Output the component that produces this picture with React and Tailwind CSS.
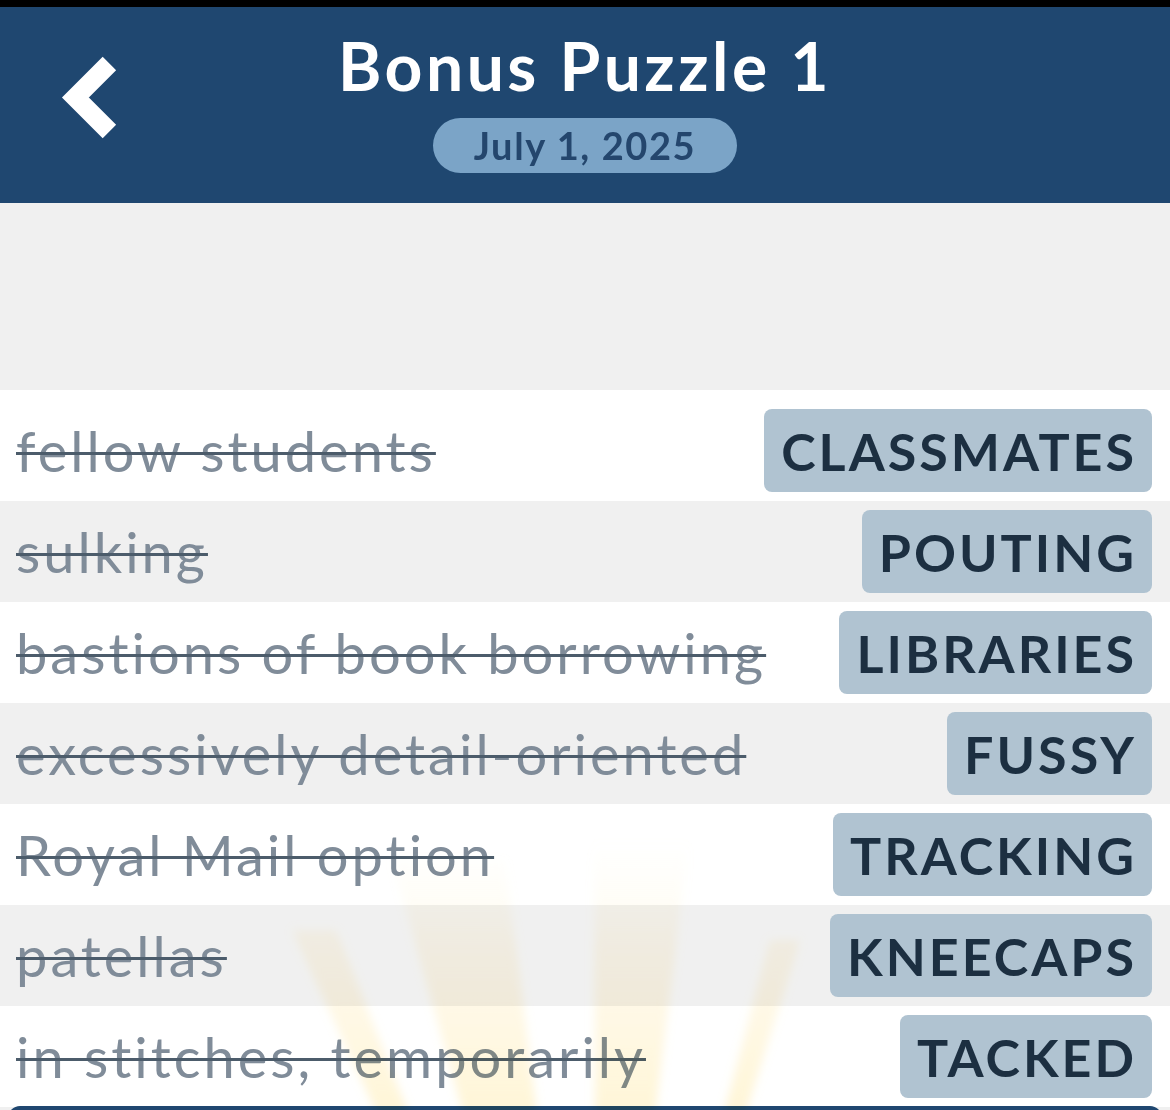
const clues = [
  { clue: "fellow students", answer: "CLASSMATES" },
  { clue: "sulking", answer: "POUTING" },
  { clue: "bastions of book borrowing", answer: "LIBRARIES" },
  { clue: "excessively detail-oriented", answer: "FUSSY" },
  { clue: "Royal Mail option", answer: "TRACKING" },
  { clue: "patellas", answer: "KNEECAPS" },
  { clue: "in stitches, temporarily", answer: "TACKED" },
];

// faint celebratory rays fanning up from below the list
const rays = [
  [[597, 1590], [392, 860], [505, 860]],
  [[597, 1590], [594, 830], [690, 830]],
  [[597, 1590], [292, 930], [336, 930]],
  [[597, 1590], [770, 940], [800, 940]],
];

function Sunburst() {
  return (
    <svg
      className="pointer-events-none absolute left-0 top-0 mix-blend-multiply"
      width="1170"
      height="1110"
      viewBox="0 0 1170 1110"
    >
      <defs>
        <linearGradient id="rayFade" gradientUnits="userSpaceOnUse" x1="0" y1="1110" x2="0" y2="840">
          <stop offset="0" stopColor="#ffe79c" stopOpacity="0.4" />
          <stop offset="0.6" stopColor="#ffeab0" stopOpacity="0.22" />
          <stop offset="1" stopColor="#fff1c8" stopOpacity="0" />
        </linearGradient>
        <filter id="raySoft" x="-20%" y="-20%" width="140%" height="140%">
          <feGaussianBlur stdDeviation="5" />
        </filter>
      </defs>
      <g filter="url(#raySoft)">
        {rays.map((r, i) => (
          <polygon key={i} points={r.map(p => p.join(",")).join(" ")} fill="url(#rayFade)" />
        ))}
      </g>
    </svg>
  );
}

function BackArrow() {
  return (
    <svg width="200" height="196" viewBox="0 0 200 196">
      <polyline
        points="109.4,56.5 75.4,90.5 109.4,124.5"
        fill="none"
        stroke="#ffffff"
        strokeWidth="19"
        strokeLinecap="butt"
        strokeLinejoin="miter"
      />
    </svg>
  );
}

export default function App() {
  return (
    <div
      className="relative w-[1170px] h-[1110px] overflow-hidden bg-[#f0f0f0] flex flex-col"
      style={{ fontFamily: "Lato, 'Noto Sans', sans-serif" }}
    >
      <div className="shrink-0 h-[7px] bg-black" />
      <header className="shrink-0 h-[196px] bg-[#1f4770] grid grid-cols-[200px_1fr_200px]">
        <BackArrow />
        <div className="flex flex-col items-center pt-[19px]">
          <h1 className="text-[66px] leading-[80px] font-bold text-white tracking-[3.5px]">Bonus Puzzle 1</h1>
          <div className="mt-[12px] h-[55px] w-[304px] rounded-full bg-[#7ba4c7] flex items-center justify-center">
            <span className="text-[38px] font-bold text-[#24466d] tracking-[1.6px]">July 1, 2025</span>
          </div>
        </div>
        <div />
      </header>

      <div className="shrink-0 h-[187px]" />

      <div className="shrink-0 bg-white pt-[10px]">
        {clues.map((c, i) => (
          <div
            key={c.answer}
            className={`h-[101px] flex items-center justify-between ${i % 2 === 0 ? "bg-white" : "bg-[#f0f0f0]"}`}
          >
            <span className="pl-[16px] text-[56px] tracking-[3px] text-[#808c99] line-through decoration-[#4c5c6b] decoration-3">
              {c.clue}
            </span>
            <span className="mr-[18px] h-[83px] flex items-center rounded-[8px] bg-[#b0c3d1] pl-[17px] pr-[15px] text-[52px] tracking-[3px] font-bold text-[#1c2f41]">
              {c.answer}
            </span>
          </div>
        ))}
      </div>

      <div className="shrink-0 mx-[8px] mt-[-1px] h-[12px] rounded-t-[14px] bg-[#1f4770]" />

      <Sunburst />
    </div>
  );
}
